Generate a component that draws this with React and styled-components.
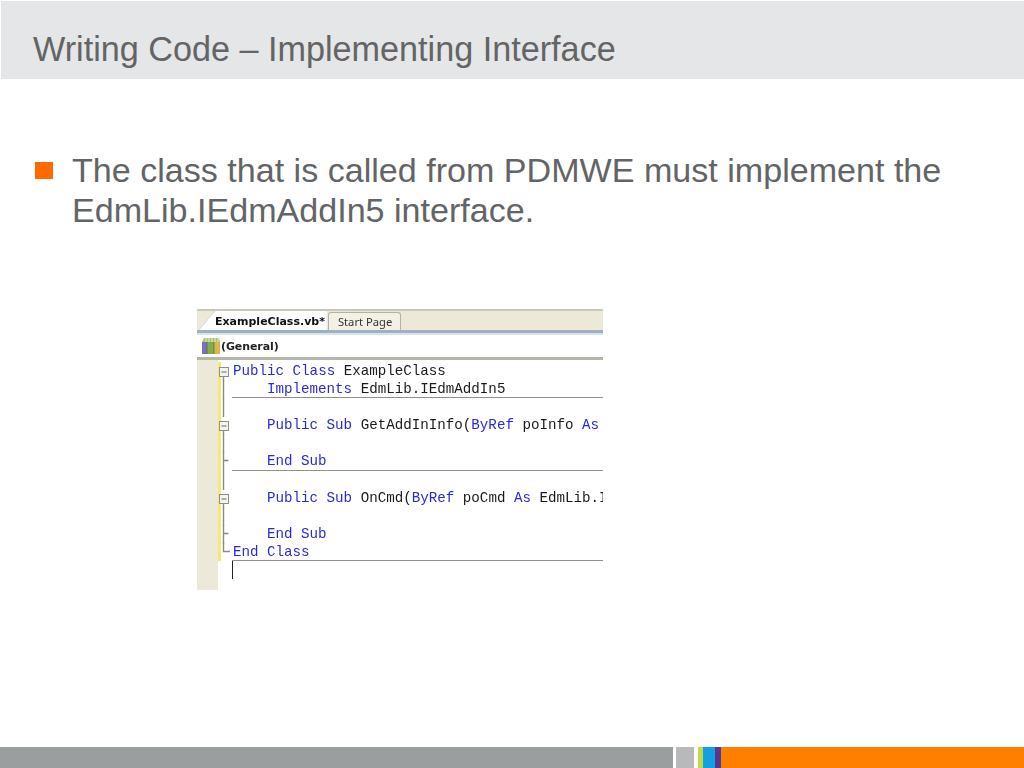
import styled, { createGlobalStyle } from 'styled-components';

const lines = [
  { mark: 'box', indent: 0, sep: false, parts: [['k', 'Public Class '], ['t', 'ExampleClass']] },
  { mark: 'line', indent: 1, sep: true, parts: [['k', 'Implements '], ['t', 'EdmLib.IEdmAddIn5']] },
  { mark: 'line', indent: 0, sep: false, parts: [] },
  { mark: 'box', indent: 1, sep: false, parts: [['k', 'Public Sub '], ['t', 'GetAddInInfo('], ['k', 'ByRef '], ['t', 'poInfo '], ['k', 'As']] },
  { mark: 'line', indent: 0, sep: false, parts: [] },
  { mark: 'tick', indent: 1, sep: true, parts: [['k', 'End Sub']] },
  { mark: 'line', indent: 0, sep: false, parts: [] },
  { mark: 'box', indent: 1, sep: false, parts: [['k', 'Public Sub '], ['t', 'OnCmd('], ['k', 'ByRef '], ['t', 'poCmd '], ['k', 'As '], ['t', 'EdmLib.I']] },
  { mark: 'line', indent: 0, sep: false, parts: [] },
  { mark: 'tick', indent: 1, sep: false, parts: [['k', 'End Sub']] },
  { mark: 'end', indent: 0, sep: true, parts: [['k', 'End Class']] },
];

function Marker({ kind }) {
  return (
    <MarkerSvg width="14" height="19" viewBox="0 0 14 19" fill="none">
      {kind === 'box' && (
        <>
          <path d="M5.5 14V19" stroke="#8a8a84" strokeWidth="1.4" />
          <rect x="1.5" y="5.5" width="9" height="9" fill="#f4f3ee" stroke="#8f8f88" />
          <path d="M3.5 10H8.5" stroke="#666" />
        </>
      )}
      {kind === 'line' && <path d="M5.5 0V19" stroke="#8a8a84" strokeWidth="1.4" />}
      {kind === 'tick' && <path d="M5.5 0V19M5.5 8.5H10.5" stroke="#8a8a84" strokeWidth="1.4" />}
      {kind === 'end' && <path d="M5.5 0V8.5H12" stroke="#8a8a84" strokeWidth="1.4" />}
    </MarkerSvg>
  );
}

function BooksIcon() {
  return (
    <svg width="19" height="18" viewBox="0 0 19 18">
      <rect x="0" y="5" width="5" height="12" fill="#7a6fc0" />
      <rect x="5" y="5" width="7" height="12" fill="#7fae4a" />
      <rect x="12" y="5" width="6" height="12" fill="#d8b84a" />
      <path d="M0 5L2 1H17L18 5Z" fill="#aebd7c" />
      <path d="M4 1V5M7 1V5M10 1V5M13 1V5M16 1V5" stroke="#e8ecd0" strokeWidth="1" />
      <path d="M5 5V17M12 5V17" stroke="#4d5a3a" strokeWidth="0.6" />
    </svg>
  );
}

export default function App() {
  return (
    <Slide>
      <GlobalStyle />
      <Header>
        <Title>Writing Code – Implementing Interface</Title>
      </Header>
      <Body>
        <Bullet>
          <BulletMark />
          <BulletText>
            The class that is called from PDMWE must implement the EdmLib.IEdmAddIn5 interface.
          </BulletText>
        </Bullet>
        <Editor>
          <TabStrip>
            <ActiveTabFrame>
              <ActiveTab>ExampleClass.vb*</ActiveTab>
            </ActiveTabFrame>
            <Tab>Start Page</Tab>
          </TabStrip>
          <Dropdown>
            <BooksIcon />
            (General)
          </Dropdown>
          <Code>
            {lines.map((line, i) => (
              <CodeRow key={i}>
                <Gutter />
                <Outline><Marker kind={line.mark} /></Outline>
                <CodeText $indent={line.indent} $sep={line.sep}>
                  {line.parts.map(([kind, text], j) => (
                    kind === 'k' ? <Keyword key={j}>{text}</Keyword> : <span key={j}>{text}</span>
                  ))}
                </CodeText>
              </CodeRow>
            ))}
            <LastRow>
              <Caret />
            </LastRow>
          </Code>
        </Editor>
      </Body>
      <Footer>
        <Stripe $w={673} $c="#9b9e9e" />
        <Stripe $w={3} $c="#ffffff" />
        <Stripe $w={18} $c="#b7b9bb" />
        <Stripe $w={4} $c="#ffffff" />
        <Stripe $w={5} $c="#c4d84a" />
        <Stripe $w={12} $c="#12a0e0" />
        <Stripe $w={6} $c="#5a3494" />
        <OrangeStripe />
      </Footer>
    </Slide>
  );
}

const GlobalStyle = createGlobalStyle`
  html, body {
    margin: 0;
    padding: 0;
    background: #ffffff;
  }
`;
const Slide = styled.div`
  display: flex;
  flex-direction: column;
  width: 1024px;
  height: 768px;
  overflow: hidden;
  font-family: "Liberation Sans", Arial, sans-serif;
  color: #636466;
`;
const Header = styled.header`
  display: flex;
  align-items: center;
  height: 60px;
  margin: 1px 0 0 1px;
  padding: 18px 0 0 32px;
  background: #e5e6e7;
`;
const Title = styled.h1`
  margin: 0;
  font-size: 34.2px;
  font-weight: 400;
  line-height: 1;
`;
const Body = styled.main`
  flex: 1;
  display: flex;
  flex-direction: column;
  padding: 71px 0 0 35px;
`;
const Bullet = styled.div`
  display: flex;
  align-items: flex-start;
  gap: 19px;
  width: 940px;
`;
const BulletMark = styled.span`
  flex: none;
  width: 18px;
  height: 17px;
  margin-top: 12px;
  background: #ff6a00;
`;
const BulletText = styled.p`
  margin: 0;
  font-size: 34.08px;
  line-height: 40px;
`;
const Editor = styled.div`
  width: 406px;
  height: 281px;
  margin: 79px 0 0 162px;
  overflow: hidden;
  background: #ffffff;
  filter: blur(0.35px);
`;
const TabStrip = styled.div`
  display: flex;
  align-items: flex-end;
  height: 19px;
  padding-left: 2px;
  background: #ece9d8;
  border-top: 2px solid #c9c7b8;
  border-bottom: 3px solid #9fb0c0;
`;
const ActiveTabFrame = styled.div`
  filter: drop-shadow(0 0 0.5px #77776f);
`;
const ActiveTab = styled.div`
  height: 19px;
  padding: 0 2px 0 16px;
  background: #ffffff;
  clip-path: polygon(0 100%, 16px 0, 100% 0, 100% 100%);
  color: #111111;
  font-family: "DejaVu Sans", Verdana, sans-serif;
  font-size: 11px;
  font-weight: 700;
  line-height: 21px;
  white-space: nowrap;
`;
const Tab = styled.div`
  height: 17px;
  margin-left: 1px;
  padding: 0 8px 0 9px;
  background: #f3f1e6;
  border: 1px solid #b4b2a4;
  border-bottom: none;
  border-radius: 3px 3px 0 0;
  color: #333333;
  font-family: Tahoma, "Noto Sans", sans-serif;
  font-size: 11.2px;
  line-height: 17px;
  white-space: nowrap;
`;
const Dropdown = styled.div`
  display: flex;
  align-items: center;
  height: 22px;
  padding-left: 5px;
  border-top: 2px solid #d6e2ee;
  border-bottom: 3px solid #b5b6aa;
  color: #222222;
  font-family: "DejaVu Sans", Verdana, sans-serif;
  font-size: 11px;
  font-weight: 700;
  letter-spacing: -0.1px;
`;
const Code = styled.div`
  height: 100%;
  padding-top: 2px;
  background: linear-gradient(to right, #ece9d8 21px, #ffffff 21px);
  font-family: "Liberation Mono", "Courier New", monospace;
  font-size: 14.2px;
  color: #1a1a1a;
`;
const CodeRow = styled.div`
  display: flex;
  height: 18.1px;
`;
const Gutter = styled.div`
  flex: none;
  width: 21px;
  border-right: 3px solid #f5e87a;
`;
const Outline = styled.div`
  flex: none;
  width: 11px;
`;
const MarkerSvg = styled.svg`
  display: block;
  margin-left: -3px;
`;
const CodeText = styled.div`
  flex: 1;
  min-width: 0;
  padding-left: ${props => props.$indent ? 35 : 1}px;
  line-height: 18px;
  white-space: pre;
  overflow: hidden;
  border-bottom: ${props => props.$sep ? '1px solid #8f8f8f' : 'none'};
  box-sizing: border-box;
`;
const Keyword = styled.span`
  color: #2a2ad8;
`;
const LastRow = styled.div`
  display: flex;
  height: 29px;
  padding-left: 35px;
`;
const Caret = styled.div`
  width: 1px;
  height: 18px;
  background: #222222;
`;
const Footer = styled.footer`
  display: flex;
  height: 21px;
`;
const Stripe = styled.div`
  flex: none;
  width: ${props => props.$w}px;
  background: ${props => props.$c};
`;
const OrangeStripe = styled.div`
  flex: 1;
  background: #ff7f00;
`;
